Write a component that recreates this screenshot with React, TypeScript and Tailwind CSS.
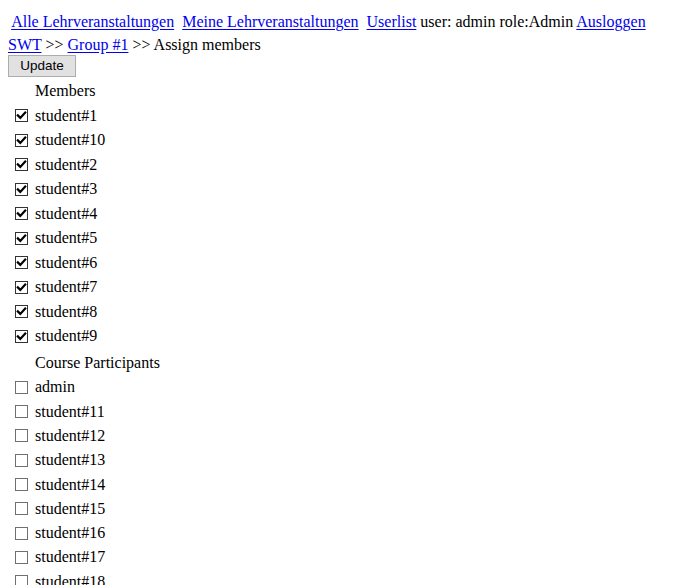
import React from "react";

const members = ["student#1","student#10","student#2","student#3","student#4","student#5","student#6","student#7","student#8","student#9"];
const participants = ["admin","student#11","student#12","student#13","student#14","student#15","student#16","student#17","student#18","student#19"];

function Box({ checked }: { checked: boolean }) {
  return (
    <span className={`relative ml-[7px] flex h-[13px] w-[13px] shrink-0 items-center justify-center border bg-white ${checked ? "border-[#333333]" : "border-[#707070]"}`}>
      {checked && (
        <svg width="11" height="11" viewBox="0 0 11 11" className="block">
          <path d="M1.8 5.4 L4.3 7.9 L9.2 2.6" fill="none" stroke="#000" strokeWidth="2.2" strokeLinecap="square" />
        </svg>
      )}
    </span>
  );
}

function Row({ label, checked, h }: { label: string; checked: boolean; h: string }) {
  return (
    <div className={`flex items-center ${h}`}>
      <Box checked={checked} />
      <span className="ml-[7px] leading-[18px]">{label}</span>
    </div>
  );
}

const link = "text-[#0000ee] underline underline-offset-[2px]";

export default function App() {
  return (
    <div className="h-[585px] overflow-hidden bg-white pl-2 pt-[13px] font-['Liberation_Serif',serif] text-[16px] text-black">
      <div className="h-[23px] whitespace-pre leading-[18px]">
        {" "}<a href="#" className={link}>Alle Lehrveranstaltungen</a>{"\u00a0 "}
        <a href="#" className={link}>Meine Lehrveranstaltungen</a>{"\u00a0 "}
        <a href="#" className={link}>Userlist</a>{" user: admin role:Admin "}
        <a href="#" className={link}>Ausloggen</a>
      </div>
      <div className="h-[19px] whitespace-pre leading-[18px]">
        <a href="#" className={link}>SWT</a>{" >> "}
        <a href="#" className={link}>Group #1</a>{" >> Assign members"}
      </div>
      <button className="flex h-[22px] w-[68px] items-center justify-center border border-[#adadad] bg-[#e1e1e1] font-['Liberation_Sans',sans-serif] text-[13.5px] leading-none text-black">
        Update
      </button>
      <div className="mt-[1.8px]">
        <div className="flex h-[24.5px] items-center pl-[27px] leading-[18px]">Members</div>
        {members.map((m) => (
          <Row key={m} label={m} checked h="h-[24.5px]" />
        ))}
        <div className="mt-[2.5px] flex h-[24.4px] items-center pl-[27px] leading-[18px]">Course Participants</div>
        {participants.map((m) => (
          <Row key={m} label={m} checked={false} h="h-[24.3px]" />
        ))}
      </div>
    </div>
  );
}
